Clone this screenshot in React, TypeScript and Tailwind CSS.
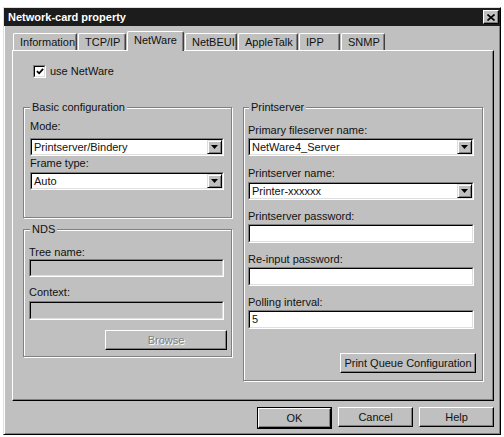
import React from "react";

type Kids = { children?: React.ReactNode; className?: string };

function Sunken({ children, className = "", inner = "bg-white" }: Kids & { inner?: string }) {
  return (
    <div className={`border border-t-[#808080] border-l-[#808080] border-r-white border-b-white ${className}`}>
      <div className={`h-full flex items-center border border-t-black border-l-black border-r-[#dfdfdf] border-b-[#dfdfdf] ${inner}`}>
        {children}
      </div>
    </div>
  );
}

function Arrow() {
  return (
    <div className="w-[15px] h-full flex items-center justify-center bg-[#c0c0c0] border border-t-[#dfdfdf] border-l-[#dfdfdf] border-r-black border-b-black shadow-[inset_1px_1px_0_#fff,inset_-1px_-1px_0_#808080]">
      <svg width="7" height="4" viewBox="0 0 7 4">
        <polygon points="0,0 7,0 3.5,4" fill="#000" />
      </svg>
    </div>
  );
}

function Select({ value, className = "" }: { value: string; className?: string }) {
  return (
    <Sunken className={`h-[18px] ${className}`}>
      <span className="flex-1 pl-[2px] truncate">{value}</span>
      <Arrow />
    </Sunken>
  );
}

function Button({ children, className = "", disabled = false }: Kids & { disabled?: boolean }) {
  return (
    <div
      className={`h-[20px] flex items-center justify-center bg-[#c0c0c0] border border-t-white border-l-white border-r-black border-b-black shadow-[inset_-1px_-1px_0_#808080] ${
        disabled ? "text-[#808080] [text-shadow:1px_1px_0_#fff]" : ""
      } ${className}`}
    >
      {children}
    </div>
  );
}

function Tab({ label, className = "", active = false }: { label: string; className?: string; active?: boolean }) {
  return (
    <div
      className={`flex items-start pl-[6px] pt-[2px] border-t border-l border-t-white border-l-white border-r border-r-[#404040] shadow-[inset_-1px_0_0_#808080] rounded-tl-[2px] rounded-tr-[2px] bg-[#c0c0c0] ${
        active ? "h-[20px] -mb-[1px] relative z-10" : "h-[17px]"
      } ${className}`}
    >
      {label}
    </div>
  );
}

const group =
  "m-0 pt-0 pb-0 border border-[#808080] shadow-[1px_1px_0_#fff,inset_1px_1px_0_#fff] min-w-0";

export default function App() {
  return (
    <div className="w-[504px] h-[437px] bg-white pt-[7px] pl-[3px] font-['Liberation_Sans',Arial,sans-serif] text-[11px] leading-[13px] text-[#111]">
      <div className="w-[498px] h-[428px] bg-[#c0c0c0] border border-t-[#dfdfdf] border-l-[#dfdfdf] border-r-black border-b-black shadow-[inset_1px_1px_0_#fff,inset_-1px_-1px_0_#808080] flex flex-col">
        <div className="h-[18px] bg-[#1c1c1c] flex items-center justify-between pl-[4px] pr-[1px]">
          <span className="text-white font-bold text-[11px]">Network-card property</span>
          <div className="w-[16px] h-[14px] flex items-center justify-center bg-[#c0c0c0] border border-t-white border-l-white border-r-black border-b-black shadow-[inset_-1px_-1px_0_#808080]">
            <svg width="8" height="7" viewBox="0 0 8 7">
              <path d="M0.5 0.5 L7.5 6.5 M7.5 0.5 L0.5 6.5" stroke="#000" strokeWidth="1.6" />
            </svg>
          </div>
        </div>

        <div className="mt-[5px] ml-[9px] h-[19px] flex items-end gap-[1px]">
          <Tab label="Information" className="w-[64px]" />
          <Tab label="TCP/IP" className="w-[48px]" />
          <Tab label="NetWare" className="w-[57px]" active />
          <Tab label="NetBEUI" className="w-[52px]" />
          <Tab label="AppleTalk" className="w-[60px]" />
          <Tab label="IPP" className="w-[41px]" />
          <Tab label="SNMP" className="w-[44px]" />
        </div>

        <div className="ml-[8px] w-[482px] h-[351px] border border-t-white border-l-white border-r-black border-b-black shadow-[inset_-1px_-1px_0_#808080] pt-[14px] pl-[10px]">
          <div className="ml-[10px] flex items-center gap-[4px]">
            <Sunken className="w-[13px] h-[13px]">
              <svg width="9" height="9" viewBox="0 0 9 9" className="ml-[1px]">
                <path d="M1 4 L3.5 6.5 L8 1.5" stroke="#000" strokeWidth="2" fill="none" />
              </svg>
            </Sunken>
            <span>use NetWare</span>
          </div>

          <div className="mt-[23px] flex gap-[11px]">
            <div className="w-[209px] flex flex-col">
              <fieldset className={`${group} h-[117px] pl-[6px] pr-[7px]`}>
                <legend className="px-[2px] bg-[#c0c0c0]">Basic configuration</legend>
                <div className="mt-[6px]">Mode:</div>
                <Select value="Printserver/Bindery" className="mt-[5px]" />
                <div className="mt-[1px]">Frame type:</div>
                <Select value="Auto" className="mt-[2px]" />
              </fieldset>

              <fieldset className={`${group} mt-[5px] h-[134px] pl-[5px] pr-[7px]`}>
                <legend className="ml-[1px] px-[2px] bg-[#c0c0c0]">NDS</legend>
                <div className="mt-[10px]">Tree name:</div>
                <Sunken className="h-[18px]" inner="bg-[#c0c0c0]" />
                <div className="mt-[9px]">Context:</div>
                <Sunken className="mt-[2px] h-[19px]" inner="bg-[#c0c0c0]" />
                <div className="flex justify-end -mr-[3px] mt-[10px]">
                  <Button disabled className="w-[122px]">Browse</Button>
                </div>
              </fieldset>
            </div>

            <fieldset className={`${group} w-[240px] h-[280px] pl-[4px] pr-[8px]`}>
              <legend className="ml-[1px] px-[2px] bg-[#c0c0c0]">Printserver</legend>
              <div className="mt-[10px]">Primary fileserver name:</div>
              <Select value="NetWare4_Server" className="mt-[1px]" />
              <div className="mt-[11px]">Printserver name:</div>
              <Select value="Printer-xxxxxx" className="mt-[2px]" />
              <div className="mt-[10px]">Printserver password:</div>
              <Sunken className="mt-[1px] h-[19px]" />
              <div className="mt-[10px]">Re-input password:</div>
              <Sunken className="mt-[1px] h-[19px]" />
              <div className="mt-[10px]">Polling interval:</div>
              <Sunken className="mt-[1px] h-[19px]">
                <span className="pl-[2px]">5</span>
              </Sunken>
              <div className="flex justify-end -mr-[2px] mt-[24px]">
                <Button className="w-[136px]">Print Queue Configuration</Button>
              </div>
            </fieldset>
          </div>
        </div>

        <div className="ml-[8px] w-[482px] mt-[6px] flex justify-end gap-[6px]">
          <div className="border border-black">
            <Button className="w-[73px] h-[18px]">OK</Button>
          </div>
          <Button className="w-[75px]">Cancel</Button>
          <Button className="w-[75px]">Help</Button>
        </div>
      </div>
    </div>
  );
}
